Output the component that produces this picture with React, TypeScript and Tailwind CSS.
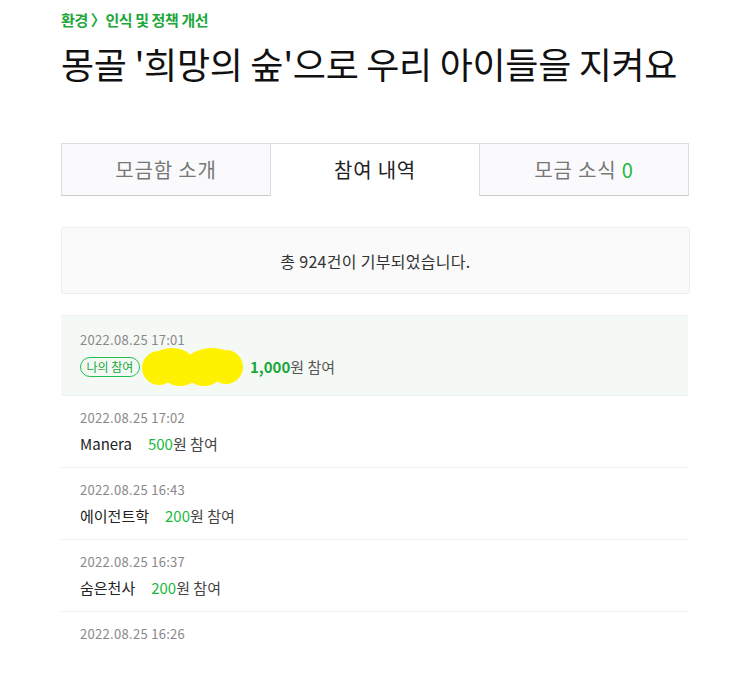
import React from "react";

const font = { fontFamily: '"Noto Sans CJK KR", "Noto Sans", sans-serif' };

type Row = { date: string; name?: string; amount?: string; mine?: boolean };

const rows: Row[] = [
  { date: "2022.08.25 17:01", amount: "1,000", mine: true },
  { date: "2022.08.25 17:02", name: "Manera", amount: "500" },
  { date: "2022.08.25 16:43", name: "에이전트학", amount: "200" },
  { date: "2022.08.25 16:37", name: "숨은천사", amount: "200" },
  { date: "2022.08.25 16:26" },
];

function Blob() {
  return (
    <svg width="106" height="42" viewBox="0 0 106 42" className="-my-[11px] shrink-0">
      <g fill="#fff200">
        <ellipse cx="19" cy="22" rx="17" ry="17" />
        <ellipse cx="40" cy="23" rx="20" ry="17" />
        <ellipse cx="64" cy="22" rx="20" ry="18" />
        <ellipse cx="86" cy="21" rx="17" ry="17" />
        <ellipse cx="32" cy="14" rx="20" ry="12" />
        <ellipse cx="72" cy="14" rx="22" ry="12" />
      </g>
    </svg>
  );
}

export default function App() {
  return (
    <div className="w-[734px] h-[687px] bg-white overflow-hidden" style={font}>
      <div className="ml-[61px] w-[629px]">
        <div className="pt-[10px] text-[15px] leading-[20px] font-bold text-[#20a73a] tracking-[-0.4px]">
          환경 〉인식 및 정책 개선
        </div>
        <h1 className="mt-[11px] text-[36px] leading-[44px] text-[#111] tracking-[-0.3px]">
          몽골 '희망의 숲'으로 우리 아이들을 지켜요
        </h1>

        <div className="mt-[58px] flex w-[628px] h-[53px] text-[20px] tracking-[0.8px]">
          <div className="flex-1 flex items-center justify-center bg-[#fafafc] border border-[#dddddd] border-b-[#cccccc] text-[#777]">
            모금함 소개
          </div>
          <div className="flex-1 flex items-center justify-center bg-white border-t border-[#dddddd] text-[#222]">
            참여 내역
          </div>
          <div className="flex-1 flex items-center justify-center bg-[#fafafc] border border-[#dddddd] border-b-[#cccccc] text-[#777]">
            모금 소식&nbsp;<span className="text-[#19b93c]">0</span>
          </div>
        </div>

        <div className="mt-[31px] h-[67px] bg-[#fafafa] border border-[#eeeeee] rounded-[3px] flex items-center justify-center text-[16px] tracking-[0.3px] text-[#333]">
          총 924건이 기부되었습니다.
        </div>

        <div className="mt-[21px] w-[627px]">
          {rows.map((r, i) => (
            <div
              key={i}
              className={
                r.mine
                  ? "bg-[#f5f9f6] border-y border-[#eef1ef] pl-[19px] pt-[15px] pb-[18px]"
                  : i === rows.length - 1
                  ? "pl-[19px] pt-[13px] pb-[13px]"
                  : "border-b border-[#eeeeee] pl-[19px] pt-[13px] pb-[13px]"
              }
            >
              <div className="text-[13px] leading-[18px] tracking-[0.3px] text-[#888]">{r.date}</div>
              {r.mine ? (
                <div className="mt-[8px] h-[20px] flex items-center text-[15px]">
                  <span className="h-[20px] w-[60px] rounded-full border border-[#22c04f] text-[#1aa73a] text-[12px] flex items-center justify-center">
                    나의 참여
                  </span>
                  <Blob />
                  <span className="ml-[4px] font-bold text-[#1aa73a]">{r.amount}</span>
                  <span className="text-[#555]">원 참여</span>
                </div>
              ) : r.name ? (
                <div className="mt-[7px] h-[20px] flex items-center text-[15px]">
                  <span className="text-[#222]">{r.name}</span>
                  <span className="ml-[16px] text-[#19b93c]">{r.amount}</span>
                  <span className="text-[#444]">원 참여</span>
                </div>
              ) : null}
            </div>
          ))}
        </div>
      </div>
    </div>
  );
}
